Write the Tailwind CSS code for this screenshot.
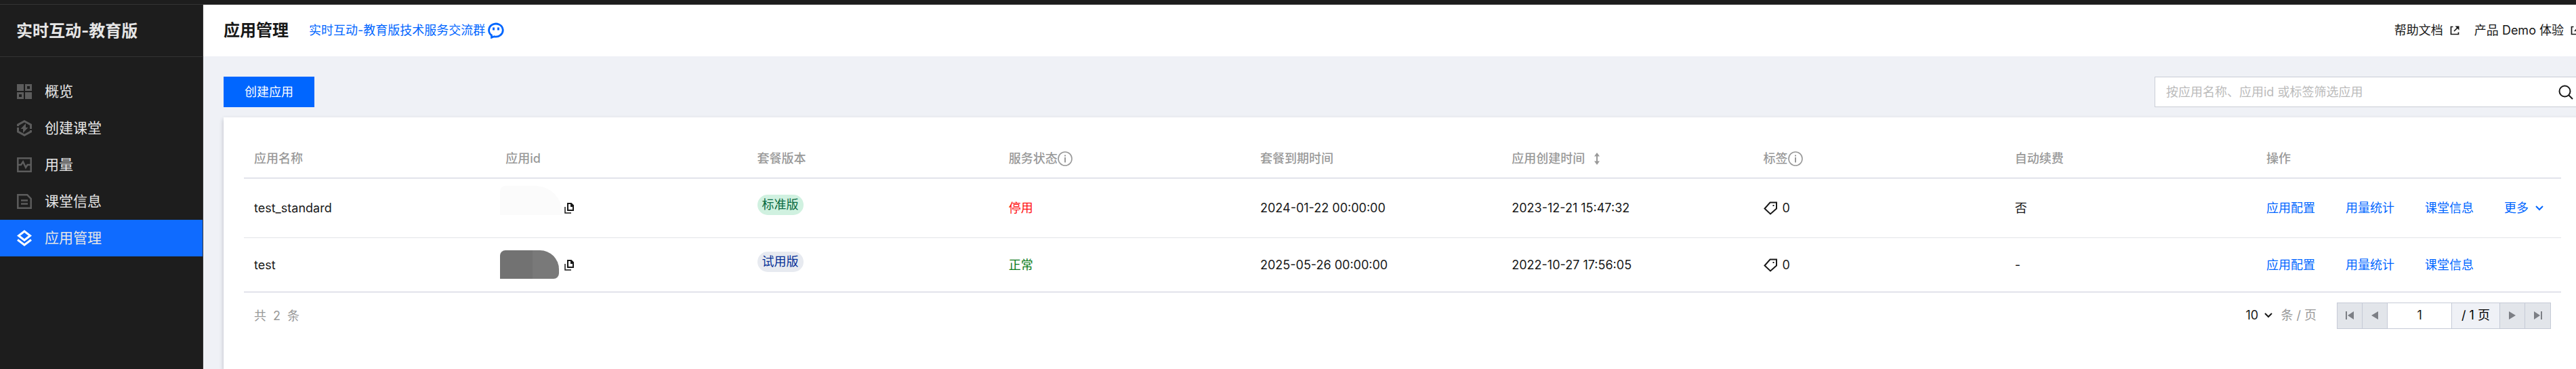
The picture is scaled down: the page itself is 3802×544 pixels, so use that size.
<!DOCTYPE html>
<html lang="zh-CN">
  <head>
    <meta charset="UTF-8" />
    <meta name="viewport" content="width=device-width, initial-scale=1.0" />
    <title>应用管理</title>
    <script src="https://cdn.jsdelivr.net/npm/@tailwindcss/browser@4"></script>
    <style>
      body {
        font-family: Inter, 'Noto Sans CJK SC', sans-serif;
      }
    </style>
  </head>
  <body class="h-screen overflow-hidden flex flex-col bg-[#eff1f6] text-lg/7 text-[#181818]">
    <svg class="hidden">
      <symbol id="info" viewBox="0 0 22 22" fill="none" stroke="currentColor" stroke-width="1.6">
        <circle cx="11" cy="11" r="10" />
        <path stroke-width="2" d="M11 9v7.500M11 5.500v2" />
      </symbol>
      <symbol id="copy" viewBox="0 0 14 16" fill="none" stroke="currentColor">
        <path stroke-width="2" d="M5 1h5l3 3v7H5z" />
        <path fill="currentColor" stroke="none" d="M9 1h2l3 3v2H9z" />
        <path stroke-width="1.5" d="M1 6v9h9" />
      </symbol>
      <symbol id="tag" viewBox="0 0 20 20" fill="none" stroke="currentColor" stroke-width="2">
        <path d="M9.500 1.500h9.500v9L10 18.500 1.500 10.500z" />
        <path d="M13.500 5h2v2h-2z" fill="currentColor" stroke="none" />
      </symbol>
      <symbol id="external" viewBox="0 0 14 14" fill="none" stroke="currentColor" stroke-width="1.7">
        <path d="M4.500 1.500H1.500v11h11V9.500M12 2L6 8" />
        <path fill="currentColor" stroke="none" d="M7.500 .5h6v6z" />
      </symbol>
      <symbol id="chevron" viewBox="0 0 12 8" fill="none" stroke="currentColor" stroke-width="2">
        <path d="M1 1l5 5 5-5" />
      </symbol>
    </svg>

    <div class="h-[7px] shrink-0 bg-[#1d1d1d] border-b border-[#333]"></div>

    <div class="flex flex-1 min-h-0">
      <aside class="w-[300px] shrink-0 bg-[#1d1d1d] border-r border-[#333] text-[#e6e6e6]">
        <h2 class="h-[77px] flex items-center px-6 pt-0.5 border-b border-[#333] text-2xl font-bold">实时互动-教育版</h2>
        <nav class="pt-6 text-[21px]">
          <a href="#" class="flex items-center gap-[19px] h-[54px] px-[25px]">
            <svg class="size-[22px] text-[#5c5c5c]" viewBox="0 0 22 22" fill="none" stroke="currentColor" stroke-width="3">
              <path fill="currentColor" stroke="none" d="M0 0h10v10H0zM12 12h10v10H12z" />
              <path d="M13.500 1.500h7v7h-7zM1.500 13.500h7v7h-7z" />
            </svg>
            概览
          </a>
          <a href="#" class="flex items-center gap-[19px] h-[54px] px-[25px]">
            <svg class="w-[22px] h-6 text-[#5c5c5c]" viewBox="0 0 22 24" fill="none" stroke="currentColor" stroke-width="3">
              <path d="M1.500 9V7L11 1.800 20.500 7v6M1.500 11v6L11 22.200 20.500 17v-2" />
              <path fill="currentColor" stroke="none" d="M13 5v6h3.500L9 19v-6H5.500z" />
            </svg>
            创建课堂
          </a>
          <a href="#" class="flex items-center gap-[19px] h-[54px] px-[25px]">
            <svg class="size-[22px] text-[#5c5c5c]" viewBox="0 0 22 22" fill="none" stroke="currentColor" stroke-width="2.500">
              <path d="M1.300 1.300h19.400v19.400H1.300zM2 11h4l3-4.500 4 8.500 2.500-4H20" />
            </svg>
            用量
          </a>
          <a href="#" class="flex items-center gap-[19px] h-[54px] px-[25px]">
            <svg class="size-[22px] text-[#5c5c5c]" viewBox="0 0 22 22" fill="none" stroke="currentColor" stroke-width="2.500">
              <path d="M1.300 1.300h14l5.400 5.700v13.700H1.300zM6 9.500h10M6 14.500h10" />
            </svg>
            课堂信息
          </a>
          <a href="#" class="flex items-center gap-[19px] h-[54px] px-[25px] bg-[#0f6bff]">
            <svg class="w-[22px] h-6 text-white" viewBox="0 0 22 24" fill="none" stroke="currentColor" stroke-width="3">
              <path d="M11 2l8.500 6.500L11 15 2.500 8.500zM1 14.500l10 7.500 10-7.500" />
            </svg>
            应用管理
          </a>
        </nav>
      </aside>

      <!-- The content runs a little past the right edge of the window -->
      <main class="flex-1 min-w-0 flex flex-col -mr-[38px]">
        <header class="h-[76px] shrink-0 flex items-center pl-[30px] pr-8 bg-white">
          <h1 class="text-2xl font-bold">应用管理</h1>
          <a href="#" class="ml-[30px] flex items-center gap-1 text-[#0066ff]">
            实时互动-教育版技术服务交流群
            <svg class="size-6" viewBox="0 0 24 24" fill="none" stroke="currentColor" stroke-width="2.800">
              <path d="M5.500 19A10.300 9.500 0 1 1 9.500 20.800L5.500 22.300z" />
              <path fill="currentColor" stroke="none" d="M7 7.500h3v4H7zM14 7.500h3v4h-3z" />
            </svg>
          </a>
          <div class="ml-auto flex gap-[22px]">
            <a href="#" class="flex items-center gap-[10px]">帮助文档 <svg class="size-[14px]"><use href="#external" /></svg></a>
            <a href="#" class="flex items-center gap-[10px]">产品 Demo 体验 <svg class="size-[14px]"><use href="#external" /></svg></a>
          </div>
        </header>

        <div class="flex-1 flex flex-col px-[30px] pt-[30px]">
          <div class="flex justify-between">
            <button type="button" class="h-[45px] px-[31px] bg-[#0066ff] text-white">创建应用</button>
            <div class="w-[630px] h-[45px] flex items-center bg-white border border-[#c9cdd6]">
              <input type="text" aria-label="筛选应用" placeholder="按应用名称、应用id 或标签筛选应用" class="flex-1 h-full px-4 outline-none placeholder:text-[#bbb]" />
              <button type="button" aria-label="搜索" class="px-[11px]">
                <svg class="size-[22px]" viewBox="0 0 22 22" fill="none" stroke="currentColor" stroke-width="2">
                  <circle cx="9.500" cy="9.500" r="8" />
                  <path d="M15 15l6 6" />
                </svg>
              </button>
            </div>
          </div>

          <section class="flex-1 mt-[15px] px-[30px] pt-[33px] bg-white shadow-[0_3px_6px_rgba(54,58,80,0.3)]">
            <table class="w-full table-fixed text-left">
              <thead class="text-[#999]">
                <tr class="h-14 border-b border-[#c8cad9]">
                  <th class="px-[15px] font-medium">应用名称</th>
                  <th class="px-[15px] font-medium">应用id</th>
                  <th class="px-[15px] font-medium">套餐版本</th>
                  <th class="px-[15px] font-medium"><span class="flex items-center">服务状态<svg class="size-[22px]"><use href="#info" /></svg></span></th>
                  <th class="px-[15px] font-medium">套餐到期时间</th>
                  <th class="px-[15px] font-medium">
                    <span class="flex items-center gap-[14px]">应用创建时间
                      <svg class="w-2 h-[18px]" viewBox="0 0 8 18" fill="currentColor"><path d="M4 0l4 5.500H5v7h3L4 18l-4-5.500h3v-7H0z" /></svg>
                    </span>
                  </th>
                  <th class="px-[15px] font-medium"><span class="flex items-center">标签<svg class="size-[22px]"><use href="#info" /></svg></span></th>
                  <th class="px-[15px] font-medium">自动续费</th>
                  <th class="w-[450px] px-[15px] font-medium">操作</th>
                </tr>
              </thead>
              <tbody>
                <tr class="h-[88px] border-b border-[#e3e4e8]">
                  <td class="px-[15px] pt-0.5">test_standard</td>
                  <td class="relative px-[15px] pt-0.5">
                    <span class="absolute left-[7px] top-[11px] w-[92px] h-[43px] rounded-tl-lg rounded-tr-[40px] bg-[#fbfbfb]"></span>
                    <button type="button" aria-label="复制" class="block ml-[87px]"><svg class="w-[14px] h-4"><use href="#copy" /></svg></button>
                  </td>
                  <td class="px-[15px]"><span class="block w-fit mb-2 px-[7px] py-px rounded-full bg-[#d0f1e0] text-[#0a6b40]">标准版</span></td>
                  <td class="px-[15px] pt-0.5 text-[#ff1010]">停用</td>
                  <td class="px-[15px] pt-0.5">2024-01-22 00:00:00</td>
                  <td class="px-[15px] pt-0.5">2023-12-21 15:47:32</td>
                  <td class="px-[15px] pt-0.5"><span class="flex items-center gap-2"><svg class="size-5"><use href="#tag" /></svg>0</span></td>
                  <td class="px-[15px] pt-0.5">否</td>
                  <td class="px-[15px] pt-0.5">
                    <div class="flex gap-[45px] text-[#0066ff]">
                      <a href="#">应用配置</a>
                      <a href="#">用量统计</a>
                      <a href="#">课堂信息</a>
                      <button type="button" class="flex items-center gap-[10px]">更多 <svg class="w-3 h-2"><use href="#chevron" /></svg></button>
                    </div>
                  </td>
                </tr>
                <tr class="h-20 border-b border-[#c8cad9]">
                  <td class="px-[15px] pt-0.5">test</td>
                  <td class="relative px-[15px] pt-0.5">
                    <span class="absolute left-[7px] top-[18px] w-[87px] h-[42px] rounded-tl-lg rounded-tr-[28px] rounded-br-lg bg-linear-to-r from-[#727272] from-55% to-[#797979] to-55%"></span>
                    <button type="button" aria-label="复制" class="block ml-[87px]"><svg class="w-[14px] h-4"><use href="#copy" /></svg></button>
                  </td>
                  <td class="px-[15px]"><span class="block w-fit mb-2 px-[7px] py-px rounded-full bg-[#e7eaf0] text-[#052f96]">试用版</span></td>
                  <td class="px-[15px] pt-0.5 text-[#0a7a17]">正常</td>
                  <td class="px-[15px] pt-0.5">2025-05-26 00:00:00</td>
                  <td class="px-[15px] pt-0.5">2022-10-27 17:56:05</td>
                  <td class="px-[15px] pt-0.5"><span class="flex items-center gap-2"><svg class="size-5"><use href="#tag" /></svg>0</span></td>
                  <td class="px-[15px] pt-0.5">-</td>
                  <td class="px-[15px] pt-0.5">
                    <div class="flex gap-[45px] text-[#0066ff]">
                      <a href="#">应用配置</a>
                      <a href="#">用量统计</a>
                      <a href="#">课堂信息</a>
                    </div>
                  </td>
                </tr>
              </tbody>
            </table>

            <div class="flex items-center px-[15px] pt-[15px]">
              <p class="flex gap-[10px] pt-0.5 text-[#999]"><span>共</span><span>2</span><span>条</span></p>
              <div class="ml-auto flex items-center">
                <div class="flex items-center">
                  <select id="page-size" class="appearance-none w-10 outline-none">
                    <option>10</option>
                  </select>
                  <svg class="w-3 h-2 -ml-3 pointer-events-none"><use href="#chevron" /></svg>
                </div>
                <label for="page-size" class="ml-3 text-[#999]">条 / 页</label>
                <div class="ml-[30px] h-[39px] flex border border-[#c5cad6] divide-x divide-[#c5cad6]">
                  <button type="button" aria-label="第一页" class="w-[37px] flex items-center justify-center bg-[#e2e5ea] text-[#7c7f85]">
                    <svg class="size-3" viewBox="0 0 12 12" fill="currentColor"><path d="M0 0h2v12H0zM12 0v12L3 6z" /></svg>
                  </button>
                  <button type="button" aria-label="上一页" class="w-[37px] flex items-center justify-center bg-[#e2e5ea] text-[#7c7f85]">
                    <svg class="size-3" viewBox="0 0 12 12" fill="currentColor"><path d="M11 0v12L1 6z" /></svg>
                  </button>
                  <input type="text" aria-label="页码" value="1" class="w-[95px] bg-white text-center outline-none" />
                  <span class="px-[14px] flex items-center bg-[#eff1f6] text-black">/ 1 页</span>
                  <button type="button" aria-label="下一页" class="w-[37px] flex items-center justify-center bg-[#e2e5ea] text-[#7c7f85]">
                    <svg class="size-3" viewBox="0 0 12 12" fill="currentColor"><path d="M1 0v12l10-6z" /></svg>
                  </button>
                  <button type="button" aria-label="最后一页" class="w-[37px] flex items-center justify-center bg-[#e2e5ea] text-[#7c7f85]">
                    <svg class="size-3" viewBox="0 0 12 12" fill="currentColor"><path d="M10 0h2v12h-2zM0 0v12l9-6z" /></svg>
                  </button>
                </div>
              </div>
            </div>
          </section>
        </div>
      </main>
    </div>
  </body>
</html>
